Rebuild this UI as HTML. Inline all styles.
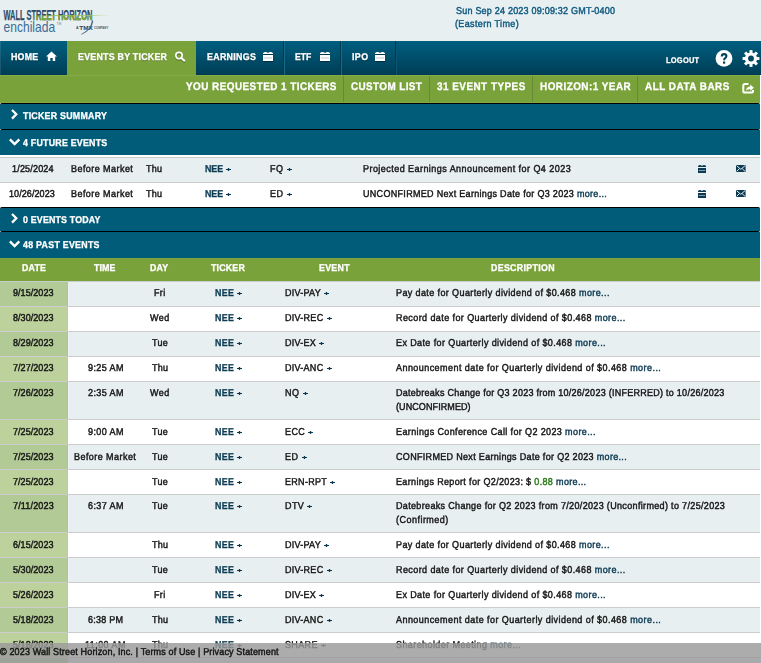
<!DOCTYPE html>
<html><head><meta charset="utf-8"><style>
html,body{margin:0;padding:0;}
body{width:761px;height:663px;overflow:hidden;position:relative;background:#ffffff;font-family:"Liberation Sans", sans-serif;}
</style></head><body>
<div style="position:absolute;left:0px;top:0px;width:761px;height:41px;background:#e8eff1;"></div><svg style="position:absolute;left:0px;top:0px;" width="120" height="40" viewBox="0 0 120 40"><defs><clipPath id="lg"><rect x="33" y="15.6" width="80" height="10"/></clipPath><linearGradient id="sw" x1="0" x2="1"><stop offset="0" stop-color="#7fae3a" stop-opacity="0.2"/><stop offset="0.25" stop-color="#86b43c"/><stop offset="0.75" stop-color="#a6c86a"/><stop offset="1" stop-color="#c9dcae" stop-opacity="0.3"/></linearGradient></defs><text x="3.5" y="19.6" font-family="Liberation Sans" font-weight="bold" font-size="14" textLength="88.8" lengthAdjust="spacingAndGlyphs" fill="#2f4c69" stroke="#2f4c69" stroke-width="0.25">WALL STREET HORIZON</text><text x="3.5" y="19.6" font-family="Liberation Sans" font-weight="bold" font-size="14" textLength="88.8" lengthAdjust="spacingAndGlyphs" fill="#7faa3a" stroke="#7faa3a" stroke-width="0.25" clip-path="url(#lg)">WALL STREET HORIZON</text><path d="M30 16.3 C 50 15.2, 80 14.6, 109 15.3 L 109 15.8 C 80 15.4, 50 15.8, 30 16.6 Z" fill="url(#sw)"/><text x="3.6" y="31.5" font-family="Liberation Sans" font-size="14.6" textLength="51.5" lengthAdjust="spacingAndGlyphs" fill="#3a6b97">enchilada</text><text x="56.5" y="24.5" font-family="Liberation Sans" font-size="3.2" fill="#5a7f9f">TM</text><text x="76" y="29" font-family="Liberation Sans" font-weight="bold" font-size="3.6" fill="#3a4f66">A</text><text x="79.3" y="29.8" font-family="Liberation Sans" font-weight="bold" font-size="5.8" textLength="13.5" lengthAdjust="spacingAndGlyphs" fill="#2b3f63">TMX</text><text x="94" y="28.8" font-family="Liberation Sans" font-weight="bold" font-size="3.1" textLength="14.3" lengthAdjust="spacingAndGlyphs" fill="#4a5b70">COMPANY</text><path d="M92.9 20.6 C 92.6 25.8, 89.5 31.2, 81.3 34.3 C 88.6 30.6, 91.4 26.2, 92.0 20.8 Z" fill="#3a5273" stroke="#3a5273" stroke-width="0.35"/></svg><div style="position:absolute;left:455.50px;top:7px;color:#0f5a80;font-size:10px;line-height:10px;font-weight:normal;letter-spacing:0.240px;white-space:nowrap;text-rendering:geometricPrecision;-webkit-text-stroke:0.45px;transform:scaleX(0.9000);transform-origin:0 0;">Sun Sep 24 2023 09:09:32 GMT-0400</div><div style="position:absolute;left:454.70px;top:20px;color:#0f5a80;font-size:10px;line-height:10px;font-weight:normal;letter-spacing:0.397px;white-space:nowrap;text-rendering:geometricPrecision;-webkit-text-stroke:0.45px;transform:scaleX(0.9000);transform-origin:0 0;">(Eastern Time)</div><div style="position:absolute;left:0px;top:41px;width:761px;height:34px;background:linear-gradient(#005f80, #003d55);"></div><div style="position:absolute;left:0px;top:41px;width:1px;height:34px;background:rgba(255,255,255,0.10);"></div><div style="position:absolute;left:67px;top:41px;width:129px;height:34px;background:#7aa23a;"></div><div style="position:absolute;left:283px;top:41px;width:1px;height:34px;background:#00384f;"></div><div style="position:absolute;left:284px;top:41px;width:1px;height:34px;background:#1b6a88;"></div><div style="position:absolute;left:340px;top:41px;width:1px;height:34px;background:#00384f;"></div><div style="position:absolute;left:341px;top:41px;width:1px;height:34px;background:#1b6a88;"></div><div style="position:absolute;left:395px;top:41px;width:1px;height:34px;background:#00384f;"></div><div style="position:absolute;left:396px;top:41px;width:1px;height:34px;background:#0a5674;"></div><div style="position:absolute;left:10.70px;top:53px;color:white;font-size:9.8px;line-height:9.8px;font-weight:bold;letter-spacing:0.222px;white-space:nowrap;text-rendering:geometricPrecision;-webkit-text-stroke:0.3px;transform:scaleX(0.9000);transform-origin:0 0;text-shadow:0 1px 1px rgba(0,0,0,0.3);">HOME</div><div style="position:absolute;left:77.80px;top:53px;color:white;font-size:9.8px;line-height:9.8px;font-weight:bold;letter-spacing:0.289px;white-space:nowrap;text-rendering:geometricPrecision;-webkit-text-stroke:0.3px;transform:scaleX(0.9000);transform-origin:0 0;text-shadow:0 1px 1px rgba(0,0,0,0.3);">EVENTS BY TICKER</div><div style="position:absolute;left:206.80px;top:53px;color:white;font-size:9.8px;line-height:9.8px;font-weight:bold;letter-spacing:0.365px;white-space:nowrap;text-rendering:geometricPrecision;-webkit-text-stroke:0.3px;transform:scaleX(0.9000);transform-origin:0 0;text-shadow:0 1px 1px rgba(0,0,0,0.3);">EARNINGS</div><div style="position:absolute;left:295.30px;top:53px;color:white;font-size:9.8px;line-height:9.8px;font-weight:bold;letter-spacing:0.000px;white-space:nowrap;text-rendering:geometricPrecision;-webkit-text-stroke:0.3px;transform:scaleX(0.8789);transform-origin:0 0;text-shadow:0 1px 1px rgba(0,0,0,0.3);">ETF</div><div style="position:absolute;left:351.90px;top:53px;color:white;font-size:9.8px;line-height:9.8px;font-weight:bold;letter-spacing:0.444px;white-space:nowrap;text-rendering:geometricPrecision;-webkit-text-stroke:0.3px;transform:scaleX(0.9000);transform-origin:0 0;text-shadow:0 1px 1px rgba(0,0,0,0.3);">IPO</div><div style="position:absolute;left:665.70px;top:56px;color:white;font-size:8.3px;line-height:8.3px;font-weight:bold;letter-spacing:0.267px;white-space:nowrap;text-rendering:geometricPrecision;-webkit-text-stroke:0.3px;transform:scaleX(0.9000);transform-origin:0 0;text-shadow:0 1px 1px rgba(0,0,0,0.3);">LOGOUT</div><svg style="position:absolute;left:46px;top:51px;" width="11" height="10" viewBox="0 0 11 10"><path d="M5.5 0.5 L0 5.5 L1.8 5.5 L1.8 10 L4.3 10 L4.3 7 L6.7 7 L6.7 10 L9.2 10 L9.2 5.5 L11 5.5 Z" fill="white"/></svg><svg style="position:absolute;left:174px;top:51px;filter:drop-shadow(0 1px 0 rgba(0,0,0,0.35));" width="12" height="11" viewBox="0 0 12 11"><circle cx="5" cy="4.6" r="3.2" stroke="white" stroke-width="1.6" fill="none"/><path d="M7.2 7 L10.3 9.6" stroke="white" stroke-width="2.1" stroke-linecap="round"/></svg><svg style="position:absolute;left:263px;top:52px;filter:drop-shadow(0 1px 0 rgba(0,0,0,0.35));" width="10" height="9" viewBox="0 0 10 9"><rect x="0" y="0.8" width="10" height="1.2" fill="white"/><ellipse cx="2.50" cy="1" rx="1.80" ry="1" fill="white"/><ellipse cx="7.50" cy="1" rx="1.80" ry="1" fill="white"/><rect x="0" y="3" width="10" height="6" fill="white"/><rect x="0.8" y="5.70" width="8.4" height="0.6" fill="rgba(0,60,85,0.45)"/></svg><svg style="position:absolute;left:320px;top:52px;filter:drop-shadow(0 1px 0 rgba(0,0,0,0.35));" width="10" height="9" viewBox="0 0 10 9"><rect x="0" y="0.8" width="10" height="1.2" fill="white"/><ellipse cx="2.50" cy="1" rx="1.80" ry="1" fill="white"/><ellipse cx="7.50" cy="1" rx="1.80" ry="1" fill="white"/><rect x="0" y="3" width="10" height="6" fill="white"/><rect x="0.8" y="5.70" width="8.4" height="0.6" fill="rgba(0,60,85,0.45)"/></svg><svg style="position:absolute;left:375px;top:52px;filter:drop-shadow(0 1px 0 rgba(0,0,0,0.35));" width="10" height="9" viewBox="0 0 10 9"><rect x="0" y="0.8" width="10" height="1.2" fill="white"/><ellipse cx="2.50" cy="1" rx="1.80" ry="1" fill="white"/><ellipse cx="7.50" cy="1" rx="1.80" ry="1" fill="white"/><rect x="0" y="3" width="10" height="6" fill="white"/><rect x="0.8" y="5.70" width="8.4" height="0.6" fill="rgba(0,60,85,0.45)"/></svg><svg style="position:absolute;left:715px;top:49px;" width="18" height="18" viewBox="0 0 18 18"><circle cx="9" cy="9.4" r="8.4" fill="white"/><path d="M6.8 7.4 Q6.8 5.1 9.1 5.1 Q11.4 5.1 11.4 7.1 Q11.4 8.5 10.1 9.2 Q9.1 9.8 9.1 11.3" stroke="#02415a" stroke-width="2.1" fill="none"/><rect x="8" y="12.5" width="2.2" height="2.2" fill="#02415a"/></svg><svg style="position:absolute;left:742px;top:50px;" width="18" height="18" viewBox="0 0 18 18"><g transform="translate(9 8.5)"><rect x="-1.5" y="-8.4" width="3.0" height="4" fill="white" transform="rotate(0)"/><rect x="-1.5" y="-8.4" width="3.0" height="4" fill="white" transform="rotate(45)"/><rect x="-1.5" y="-8.4" width="3.0" height="4" fill="white" transform="rotate(90)"/><rect x="-1.5" y="-8.4" width="3.0" height="4" fill="white" transform="rotate(135)"/><rect x="-1.5" y="-8.4" width="3.0" height="4" fill="white" transform="rotate(180)"/><rect x="-1.5" y="-8.4" width="3.0" height="4" fill="white" transform="rotate(225)"/><rect x="-1.5" y="-8.4" width="3.0" height="4" fill="white" transform="rotate(270)"/><rect x="-1.5" y="-8.4" width="3.0" height="4" fill="white" transform="rotate(315)"/><circle r="6.1" fill="white"/><circle r="2.9" fill="#014560"/></g></svg><div style="position:absolute;left:0px;top:75px;width:760px;height:28px;background:#7aa23a;"></div><div style="position:absolute;left:0px;top:75px;width:760px;height:1px;background:#84ab45;"></div><div style="position:absolute;left:0px;top:102px;width:760px;height:1px;background:#82a946;"></div><div style="position:absolute;left:343px;top:76px;width:1px;height:26px;background:#668838;"></div><div style="position:absolute;left:429px;top:76px;width:1px;height:26px;background:#668838;"></div><div style="position:absolute;left:532px;top:76px;width:1px;height:26px;background:#668838;"></div><div style="position:absolute;left:637px;top:76px;width:1px;height:26px;background:#668838;"></div><div style="position:absolute;left:186.00px;top:82px;color:white;font-size:11px;line-height:11px;font-weight:bold;letter-spacing:0.515px;white-space:nowrap;text-rendering:geometricPrecision;-webkit-text-stroke:0.3px;transform:scaleX(0.9000);transform-origin:0 0;">YOU REQUESTED 1 TICKERS</div><div style="position:absolute;left:351.00px;top:82px;color:white;font-size:11px;line-height:11px;font-weight:bold;letter-spacing:0.444px;white-space:nowrap;text-rendering:geometricPrecision;-webkit-text-stroke:0.3px;transform:scaleX(0.9000);transform-origin:0 0;">CUSTOM LIST</div><div style="position:absolute;left:437.10px;top:82px;color:white;font-size:11px;line-height:11px;font-weight:bold;letter-spacing:0.538px;white-space:nowrap;text-rendering:geometricPrecision;-webkit-text-stroke:0.3px;transform:scaleX(0.9000);transform-origin:0 0;">31 EVENT TYPES</div><div style="position:absolute;left:540.00px;top:82px;color:white;font-size:11px;line-height:11px;font-weight:bold;letter-spacing:0.530px;white-space:nowrap;text-rendering:geometricPrecision;-webkit-text-stroke:0.3px;transform:scaleX(0.9000);transform-origin:0 0;">HORIZON:1 YEAR</div><div style="position:absolute;left:645.10px;top:82px;color:white;font-size:11px;line-height:11px;font-weight:bold;letter-spacing:0.565px;white-space:nowrap;text-rendering:geometricPrecision;-webkit-text-stroke:0.3px;transform:scaleX(0.9000);transform-origin:0 0;">ALL DATA BARS</div><svg style="position:absolute;left:741px;top:81px;" width="15" height="14" viewBox="0 0 15 14"><path d="M7.5 3 H4 Q2.3 3 2.3 4.7 V9.9 Q2.3 11.6 4 11.6 H10.3 Q12 11.6 12 9.9 V9" stroke="white" stroke-width="2" fill="none"/><path d="M5 9.6 Q5.6 5.8 9.3 5.6 V3.6 L12.9 6.8 L9.3 10 V8 Q6.8 8 5 9.6 Z" fill="white"/></svg><div style="position:absolute;left:0;top:103px;width:760px;height:25px;background:#005c78;border-top:1px solid #000;border-radius:2px 2px 0 0;"></div><div style="position:absolute;left:22.90px;top:112px;color:white;font-size:9.8px;line-height:9.8px;font-weight:bold;letter-spacing:0.291px;white-space:nowrap;text-rendering:geometricPrecision;-webkit-text-stroke:0.3px;transform:scaleX(0.9000);transform-origin:0 0;">TICKER SUMMARY</div><svg style="position:absolute;left:10px;top:109px;" width="9" height="11" viewBox="0 0 9 11"><path d="M2 1.0 L6.3 5.3 L2 9.6" stroke="white" stroke-width="2.3" fill="none"/></svg><div style="position:absolute;left:0;top:129px;width:760px;height:25px;background:#005c78;border-top:1px solid #000;border-radius:2px 2px 0 0;"></div><div style="position:absolute;left:22.90px;top:139px;color:white;font-size:9.8px;line-height:9.8px;font-weight:bold;letter-spacing:0.270px;white-space:nowrap;text-rendering:geometricPrecision;-webkit-text-stroke:0.3px;transform:scaleX(0.9000);transform-origin:0 0;">4 FUTURE EVENTS</div><svg style="position:absolute;left:8px;top:138px;" width="13" height="9" viewBox="0 0 13 9"><path d="M1.9 1.4 L6.6 6.1 L11.3 1.4" stroke="white" stroke-width="2.4" fill="none"/></svg><div style="position:absolute;left:0px;top:155px;width:760px;height:2px;background:#ffffff;"></div><div style="position:absolute;left:0px;top:157px;width:760px;height:1px;background:#cccccc;"></div><div style="position:absolute;left:0px;top:158px;width:760px;height:24px;background:#e8eff1;"></div><div style="position:absolute;left:12.30px;top:165px;color:#161616;font-size:10px;line-height:10px;font-weight:normal;letter-spacing:0.208px;white-space:nowrap;text-rendering:geometricPrecision;-webkit-text-stroke:0.45px;transform:scaleX(0.9000);transform-origin:0 0;">1/25/2024</div><div style="position:absolute;left:71.00px;top:165px;color:#161616;font-size:10px;line-height:10px;font-weight:normal;letter-spacing:0.491px;white-space:nowrap;text-rendering:geometricPrecision;-webkit-text-stroke:0.45px;transform:scaleX(0.9000);transform-origin:0 0;">Before Market</div><div style="position:absolute;left:146.00px;top:165px;color:#161616;font-size:10px;line-height:10px;font-weight:normal;letter-spacing:0.278px;white-space:nowrap;text-rendering:geometricPrecision;-webkit-text-stroke:0.45px;transform:scaleX(0.9000);transform-origin:0 0;">Thu</div><div style="position:absolute;left:205.00px;top:165px;color:#0b3a52;font-size:9.8px;line-height:9.8px;font-weight:bold;letter-spacing:0.000px;white-space:nowrap;text-rendering:geometricPrecision;-webkit-text-stroke:0.3px;transform:scaleX(0.9000);transform-origin:0 0;">NEE</div><svg style="position:absolute;left:226px;top:168px;" width="5" height="3" viewBox="0 0 5 3"><rect x="0" y="1" width="5" height="1" fill="#0b3a52"/><rect x="2" y="0" width="1" height="3" fill="#0b3a52"/><rect x="1" y="0.5" width="3" height="2" fill="#0b3a52" opacity="0.35"/></svg><div style="position:absolute;left:270.00px;top:165px;color:#161616;font-size:10px;line-height:10px;font-weight:normal;letter-spacing:0.622px;white-space:nowrap;text-rendering:geometricPrecision;-webkit-text-stroke:0.45px;transform:scaleX(0.9000);transform-origin:0 0;">FQ</div><svg style="position:absolute;left:287px;top:168px" width="5" height="3" viewBox="0 0 5 3"><rect x="0" y="1" width="5" height="1" fill="#0b3a52"/><rect x="2" y="0" width="1" height="3" fill="#0b3a52"/><rect x="1" y="0.5" width="3" height="2" fill="#0b3a52" opacity="0.35"/></svg><div style="position:absolute;left:363.00px;top:165px;color:#161616;font-size:10px;line-height:10px;font-weight:normal;letter-spacing:0.503px;white-space:nowrap;text-rendering:geometricPrecision;-webkit-text-stroke:0.45px;transform:scaleX(0.9000);transform-origin:0 0;">Projected Earnings Announcement for Q4 2023</div><svg style="position:absolute;left:698px;top:165px;" width="8" height="8" viewBox="0 0 8 8"><rect x="0" y="0.8" width="8" height="1.2" fill="#0b3a52"/><ellipse cx="2.00" cy="1" rx="1.44" ry="1" fill="#0b3a52"/><ellipse cx="6.00" cy="1" rx="1.44" ry="1" fill="#0b3a52"/><rect x="0" y="3" width="8" height="5" fill="#0b3a52"/><rect x="0.8" y="5.20" width="6.4" height="0.6" fill="rgba(255,255,255,0.85)"/></svg><svg style="position:absolute;left:736px;top:165px;" width="10" height="7" viewBox="0 0 10 7"><rect x="0" y="0" width="9.6" height="7" rx="0.6" fill="#0b3a52"/><path d="M0.6 0.7 L4.8 4.3 L9 0.7 M0.6 6.4 L3.4 3.6 M9 6.4 L6.2 3.6" stroke="white" stroke-width="0.9" fill="none"/></svg><div style="position:absolute;left:0px;top:182px;width:760px;height:1px;background:#cccccc;"></div><div style="position:absolute;left:0px;top:183px;width:760px;height:24px;background:#ffffff;"></div><div style="position:absolute;left:9.45px;top:190px;color:#161616;font-size:10px;line-height:10px;font-weight:normal;letter-spacing:0.086px;white-space:nowrap;text-rendering:geometricPrecision;-webkit-text-stroke:0.45px;transform:scaleX(0.9000);transform-origin:0 0;">10/26/2023</div><div style="position:absolute;left:71.00px;top:190px;color:#161616;font-size:10px;line-height:10px;font-weight:normal;letter-spacing:0.491px;white-space:nowrap;text-rendering:geometricPrecision;-webkit-text-stroke:0.45px;transform:scaleX(0.9000);transform-origin:0 0;">Before Market</div><div style="position:absolute;left:146.00px;top:190px;color:#161616;font-size:10px;line-height:10px;font-weight:normal;letter-spacing:0.278px;white-space:nowrap;text-rendering:geometricPrecision;-webkit-text-stroke:0.45px;transform:scaleX(0.9000);transform-origin:0 0;">Thu</div><div style="position:absolute;left:205.00px;top:190px;color:#0b3a52;font-size:9.8px;line-height:9.8px;font-weight:bold;letter-spacing:0.000px;white-space:nowrap;text-rendering:geometricPrecision;-webkit-text-stroke:0.3px;transform:scaleX(0.9000);transform-origin:0 0;">NEE</div><svg style="position:absolute;left:226px;top:193px;" width="5" height="3" viewBox="0 0 5 3"><rect x="0" y="1" width="5" height="1" fill="#0b3a52"/><rect x="2" y="0" width="1" height="3" fill="#0b3a52"/><rect x="1" y="0.5" width="3" height="2" fill="#0b3a52" opacity="0.35"/></svg><div style="position:absolute;left:270.00px;top:190px;color:#161616;font-size:10px;line-height:10px;font-weight:normal;letter-spacing:0.622px;white-space:nowrap;text-rendering:geometricPrecision;-webkit-text-stroke:0.45px;transform:scaleX(0.9000);transform-origin:0 0;">ED</div><svg style="position:absolute;left:287px;top:193px" width="5" height="3" viewBox="0 0 5 3"><rect x="0" y="1" width="5" height="1" fill="#0b3a52"/><rect x="2" y="0" width="1" height="3" fill="#0b3a52"/><rect x="1" y="0.5" width="3" height="2" fill="#0b3a52" opacity="0.35"/></svg><div style="position:absolute;left:363.00px;top:190px;color:#161616;font-size:10px;line-height:10px;font-weight:normal;letter-spacing:0.345px;white-space:nowrap;text-rendering:geometricPrecision;-webkit-text-stroke:0.45px;transform:scaleX(0.9000);transform-origin:0 0;">UNCONFIRMED Next Earnings Date for Q3 2023 <span style="color:#0b3a52">more...</span></div><svg style="position:absolute;left:698px;top:190px;" width="8" height="8" viewBox="0 0 8 8"><rect x="0" y="0.8" width="8" height="1.2" fill="#0b3a52"/><ellipse cx="2.00" cy="1" rx="1.44" ry="1" fill="#0b3a52"/><ellipse cx="6.00" cy="1" rx="1.44" ry="1" fill="#0b3a52"/><rect x="0" y="3" width="8" height="5" fill="#0b3a52"/><rect x="0.8" y="5.20" width="6.4" height="0.6" fill="rgba(255,255,255,0.85)"/></svg><svg style="position:absolute;left:736px;top:190px;" width="10" height="7" viewBox="0 0 10 7"><rect x="0" y="0" width="9.6" height="7" rx="0.6" fill="#0b3a52"/><path d="M0.6 0.7 L4.8 4.3 L9 0.7 M0.6 6.4 L3.4 3.6 M9 6.4 L6.2 3.6" stroke="white" stroke-width="0.9" fill="none"/></svg><div style="position:absolute;left:0;top:207px;width:760px;height:23px;background:#005c78;border-top:1px solid #000;border-radius:2px 2px 0 0;"></div><div style="position:absolute;left:22.90px;top:216px;color:white;font-size:9.8px;line-height:9.8px;font-weight:bold;letter-spacing:0.214px;white-space:nowrap;text-rendering:geometricPrecision;-webkit-text-stroke:0.3px;transform:scaleX(0.9000);transform-origin:0 0;">0 EVENTS TODAY</div><svg style="position:absolute;left:10px;top:213px;" width="9" height="11" viewBox="0 0 9 11"><path d="M2 1.0 L6.3 5.3 L2 9.6" stroke="white" stroke-width="2.3" fill="none"/></svg><div style="position:absolute;left:0;top:231px;width:760px;height:26px;background:#005c78;border-top:1px solid #000;border-radius:2px 2px 0 0;"></div><div style="position:absolute;left:22.90px;top:241px;color:white;font-size:9.8px;line-height:9.8px;font-weight:bold;letter-spacing:0.308px;white-space:nowrap;text-rendering:geometricPrecision;-webkit-text-stroke:0.3px;transform:scaleX(0.9000);transform-origin:0 0;">48 PAST EVENTS</div><svg style="position:absolute;left:8px;top:240px;" width="13" height="9" viewBox="0 0 13 9"><path d="M1.9 1.4 L6.6 6.1 L11.3 1.4" stroke="white" stroke-width="2.4" fill="none"/></svg><div style="position:absolute;left:0px;top:258px;width:760px;height:23px;background:#7aa23a;"></div><div style="position:absolute;left:21.70px;top:264px;color:white;font-size:9.8px;line-height:9.8px;font-weight:bold;letter-spacing:0.185px;white-space:nowrap;text-rendering:geometricPrecision;-webkit-text-stroke:0.3px;transform:scaleX(0.9000);transform-origin:0 0;">DATE</div><div style="position:absolute;left:94.00px;top:264px;color:white;font-size:9.8px;line-height:9.8px;font-weight:bold;letter-spacing:0.074px;white-space:nowrap;text-rendering:geometricPrecision;-webkit-text-stroke:0.3px;transform:scaleX(0.9000);transform-origin:0 0;">TIME</div><div style="position:absolute;left:150.40px;top:264px;color:white;font-size:9.8px;line-height:9.8px;font-weight:bold;letter-spacing:0.111px;white-space:nowrap;text-rendering:geometricPrecision;-webkit-text-stroke:0.3px;transform:scaleX(0.9000);transform-origin:0 0;">DAY</div><div style="position:absolute;left:211.00px;top:264px;color:white;font-size:9.8px;line-height:9.8px;font-weight:bold;letter-spacing:0.222px;white-space:nowrap;text-rendering:geometricPrecision;-webkit-text-stroke:0.3px;transform:scaleX(0.9000);transform-origin:0 0;">TICKER</div><div style="position:absolute;left:319.40px;top:264px;color:white;font-size:9.8px;line-height:9.8px;font-weight:bold;letter-spacing:0.333px;white-space:nowrap;text-rendering:geometricPrecision;-webkit-text-stroke:0.3px;transform:scaleX(0.9000);transform-origin:0 0;">EVENT</div><div style="position:absolute;left:491.40px;top:264px;color:white;font-size:9.8px;line-height:9.8px;font-weight:bold;letter-spacing:0.367px;white-space:nowrap;text-rendering:geometricPrecision;-webkit-text-stroke:0.3px;transform:scaleX(0.9000);transform-origin:0 0;">DESCRIPTION</div><div style="position:absolute;left:0px;top:281px;width:760px;height:1px;background:#cccccc;"></div><div style="position:absolute;left:0px;top:282px;width:760px;height:24px;background:#e8eff1;"></div><div style="position:absolute;left:0px;top:282px;width:68px;height:24px;background:#b2ca96;"></div><div style="position:absolute;left:68px;top:282px;width:1px;height:24px;background:#eef2f8;"></div><div style="position:absolute;left:67px;top:282px;width:1px;height:24px;background:#adc791;"></div><div style="position:absolute;left:13.25px;top:289px;color:#161616;font-size:10px;line-height:10px;font-weight:normal;letter-spacing:0.056px;white-space:nowrap;text-rendering:geometricPrecision;-webkit-text-stroke:0.45px;transform:scaleX(0.9000);transform-origin:0 0;">9/15/2023</div><div style="position:absolute;left:153.95px;top:289px;color:#161616;font-size:10px;line-height:10px;font-weight:normal;letter-spacing:0.389px;white-space:nowrap;text-rendering:geometricPrecision;-webkit-text-stroke:0.45px;transform:scaleX(0.9000);transform-origin:0 0;">Fri</div><div style="position:absolute;left:215.30px;top:289px;color:#0b3a52;font-size:9.8px;line-height:9.8px;font-weight:bold;letter-spacing:0.389px;white-space:nowrap;text-rendering:geometricPrecision;-webkit-text-stroke:0.3px;transform:scaleX(0.9000);transform-origin:0 0;">NEE</div><svg style="position:absolute;left:237px;top:292px;" width="5" height="3" viewBox="0 0 5 3"><rect x="0" y="1" width="5" height="1" fill="#0b3a52"/><rect x="2" y="0" width="1" height="3" fill="#0b3a52"/><rect x="1" y="0.5" width="3" height="2" fill="#0b3a52" opacity="0.35"/></svg><div style="position:absolute;left:285.00px;top:289px;color:#161616;font-size:10px;line-height:10px;font-weight:normal;letter-spacing:0.281px;white-space:nowrap;text-rendering:geometricPrecision;-webkit-text-stroke:0.45px;transform:scaleX(0.9000);transform-origin:0 0;">DIV-PAY</div><svg style="position:absolute;left:324px;top:292px" width="5" height="3" viewBox="0 0 5 3"><rect x="0" y="1" width="5" height="1" fill="#0b3a52"/><rect x="2" y="0" width="1" height="3" fill="#0b3a52"/><rect x="1" y="0.5" width="3" height="2" fill="#0b3a52" opacity="0.35"/></svg><div style="position:absolute;left:396.00px;top:289px;color:#161616;font-size:10px;line-height:10px;font-weight:normal;letter-spacing:0.435px;white-space:nowrap;text-rendering:geometricPrecision;-webkit-text-stroke:0.45px;transform:scaleX(0.9000);transform-origin:0 0;">Pay date for Quarterly dividend of $0.468 <span style="color:#0b3a52">more...</span></div><div style="position:absolute;left:0px;top:306px;width:760px;height:1px;background:#cccccc;"></div><div style="position:absolute;left:0px;top:307px;width:760px;height:24px;background:#ffffff;"></div><div style="position:absolute;left:0px;top:307px;width:68px;height:24px;background:#bdd19c;"></div><div style="position:absolute;left:67px;top:307px;width:1px;height:24px;background:#b8cf98;"></div><div style="position:absolute;left:13.25px;top:314px;color:#161616;font-size:10px;line-height:10px;font-weight:normal;letter-spacing:0.056px;white-space:nowrap;text-rendering:geometricPrecision;-webkit-text-stroke:0.45px;transform:scaleX(0.9000);transform-origin:0 0;">8/30/2023</div><div style="position:absolute;left:150.35px;top:314px;color:#161616;font-size:10px;line-height:10px;font-weight:normal;letter-spacing:0.500px;white-space:nowrap;text-rendering:geometricPrecision;-webkit-text-stroke:0.45px;transform:scaleX(0.9000);transform-origin:0 0;">Wed</div><div style="position:absolute;left:215.30px;top:314px;color:#0b3a52;font-size:9.8px;line-height:9.8px;font-weight:bold;letter-spacing:0.389px;white-space:nowrap;text-rendering:geometricPrecision;-webkit-text-stroke:0.3px;transform:scaleX(0.9000);transform-origin:0 0;">NEE</div><svg style="position:absolute;left:237px;top:317px;" width="5" height="3" viewBox="0 0 5 3"><rect x="0" y="1" width="5" height="1" fill="#0b3a52"/><rect x="2" y="0" width="1" height="3" fill="#0b3a52"/><rect x="1" y="0.5" width="3" height="2" fill="#0b3a52" opacity="0.35"/></svg><div style="position:absolute;left:285.00px;top:314px;color:#161616;font-size:10px;line-height:10px;font-weight:normal;letter-spacing:0.304px;white-space:nowrap;text-rendering:geometricPrecision;-webkit-text-stroke:0.45px;transform:scaleX(0.9000);transform-origin:0 0;">DIV-REC</div><svg style="position:absolute;left:327px;top:317px" width="5" height="3" viewBox="0 0 5 3"><rect x="0" y="1" width="5" height="1" fill="#0b3a52"/><rect x="2" y="0" width="1" height="3" fill="#0b3a52"/><rect x="1" y="0.5" width="3" height="2" fill="#0b3a52" opacity="0.35"/></svg><div style="position:absolute;left:396.00px;top:314px;color:#161616;font-size:10px;line-height:10px;font-weight:normal;letter-spacing:0.460px;white-space:nowrap;text-rendering:geometricPrecision;-webkit-text-stroke:0.45px;transform:scaleX(0.9000);transform-origin:0 0;">Record date for Quarterly dividend of $0.468 <span style="color:#0b3a52">more...</span></div><div style="position:absolute;left:0px;top:331px;width:760px;height:1px;background:#cccccc;"></div><div style="position:absolute;left:0px;top:332px;width:760px;height:24px;background:#e8eff1;"></div><div style="position:absolute;left:0px;top:332px;width:68px;height:24px;background:#b2ca96;"></div><div style="position:absolute;left:68px;top:332px;width:1px;height:24px;background:#eef2f8;"></div><div style="position:absolute;left:67px;top:332px;width:1px;height:24px;background:#adc791;"></div><div style="position:absolute;left:13.25px;top:339px;color:#161616;font-size:10px;line-height:10px;font-weight:normal;letter-spacing:0.056px;white-space:nowrap;text-rendering:geometricPrecision;-webkit-text-stroke:0.45px;transform:scaleX(0.9000);transform-origin:0 0;">8/29/2023</div><div style="position:absolute;left:152.15px;top:339px;color:#161616;font-size:10px;line-height:10px;font-weight:normal;letter-spacing:0.278px;white-space:nowrap;text-rendering:geometricPrecision;-webkit-text-stroke:0.45px;transform:scaleX(0.9000);transform-origin:0 0;">Tue</div><div style="position:absolute;left:215.30px;top:339px;color:#0b3a52;font-size:9.8px;line-height:9.8px;font-weight:bold;letter-spacing:0.389px;white-space:nowrap;text-rendering:geometricPrecision;-webkit-text-stroke:0.3px;transform:scaleX(0.9000);transform-origin:0 0;">NEE</div><svg style="position:absolute;left:237px;top:342px;" width="5" height="3" viewBox="0 0 5 3"><rect x="0" y="1" width="5" height="1" fill="#0b3a52"/><rect x="2" y="0" width="1" height="3" fill="#0b3a52"/><rect x="1" y="0.5" width="3" height="2" fill="#0b3a52" opacity="0.35"/></svg><div style="position:absolute;left:285.00px;top:339px;color:#161616;font-size:10px;line-height:10px;font-weight:normal;letter-spacing:0.293px;white-space:nowrap;text-rendering:geometricPrecision;-webkit-text-stroke:0.45px;transform:scaleX(0.9000);transform-origin:0 0;">DIV-EX</div><svg style="position:absolute;left:319px;top:342px" width="5" height="3" viewBox="0 0 5 3"><rect x="0" y="1" width="5" height="1" fill="#0b3a52"/><rect x="2" y="0" width="1" height="3" fill="#0b3a52"/><rect x="1" y="0.5" width="3" height="2" fill="#0b3a52" opacity="0.35"/></svg><div style="position:absolute;left:396.00px;top:339px;color:#161616;font-size:10px;line-height:10px;font-weight:normal;letter-spacing:0.437px;white-space:nowrap;text-rendering:geometricPrecision;-webkit-text-stroke:0.45px;transform:scaleX(0.9000);transform-origin:0 0;">Ex Date for Quarterly dividend of $0.468 <span style="color:#0b3a52">more...</span></div><div style="position:absolute;left:0px;top:356px;width:760px;height:1px;background:#cccccc;"></div><div style="position:absolute;left:0px;top:357px;width:760px;height:24px;background:#ffffff;"></div><div style="position:absolute;left:0px;top:357px;width:68px;height:24px;background:#bdd19c;"></div><div style="position:absolute;left:67px;top:357px;width:1px;height:24px;background:#b8cf98;"></div><div style="position:absolute;left:13.25px;top:364px;color:#161616;font-size:10px;line-height:10px;font-weight:normal;letter-spacing:0.056px;white-space:nowrap;text-rendering:geometricPrecision;-webkit-text-stroke:0.45px;transform:scaleX(0.9000);transform-origin:0 0;">7/27/2023</div><div style="position:absolute;left:87.85px;top:364px;color:#161616;font-size:10px;line-height:10px;font-weight:normal;letter-spacing:0.463px;white-space:nowrap;text-rendering:geometricPrecision;-webkit-text-stroke:0.45px;transform:scaleX(0.9000);transform-origin:0 0;">9:25 AM</div><div style="position:absolute;left:151.70px;top:364px;color:#161616;font-size:10px;line-height:10px;font-weight:normal;letter-spacing:0.278px;white-space:nowrap;text-rendering:geometricPrecision;-webkit-text-stroke:0.45px;transform:scaleX(0.9000);transform-origin:0 0;">Thu</div><div style="position:absolute;left:215.30px;top:364px;color:#0b3a52;font-size:9.8px;line-height:9.8px;font-weight:bold;letter-spacing:0.389px;white-space:nowrap;text-rendering:geometricPrecision;-webkit-text-stroke:0.3px;transform:scaleX(0.9000);transform-origin:0 0;">NEE</div><svg style="position:absolute;left:237px;top:367px;" width="5" height="3" viewBox="0 0 5 3"><rect x="0" y="1" width="5" height="1" fill="#0b3a52"/><rect x="2" y="0" width="1" height="3" fill="#0b3a52"/><rect x="1" y="0.5" width="3" height="2" fill="#0b3a52" opacity="0.35"/></svg><div style="position:absolute;left:285.00px;top:364px;color:#161616;font-size:10px;line-height:10px;font-weight:normal;letter-spacing:0.304px;white-space:nowrap;text-rendering:geometricPrecision;-webkit-text-stroke:0.45px;transform:scaleX(0.9000);transform-origin:0 0;">DIV-ANC</div><svg style="position:absolute;left:327px;top:367px" width="5" height="3" viewBox="0 0 5 3"><rect x="0" y="1" width="5" height="1" fill="#0b3a52"/><rect x="2" y="0" width="1" height="3" fill="#0b3a52"/><rect x="1" y="0.5" width="3" height="2" fill="#0b3a52" opacity="0.35"/></svg><div style="position:absolute;left:396.00px;top:364px;color:#161616;font-size:10px;line-height:10px;font-weight:normal;letter-spacing:0.491px;white-space:nowrap;text-rendering:geometricPrecision;-webkit-text-stroke:0.45px;transform:scaleX(0.9000);transform-origin:0 0;">Announcement date for Quarterly dividend of $0.468 <span style="color:#0b3a52">more...</span></div><div style="position:absolute;left:0px;top:381px;width:760px;height:1px;background:#cccccc;"></div><div style="position:absolute;left:0px;top:382px;width:760px;height:37px;background:#e8eff1;"></div><div style="position:absolute;left:0px;top:382px;width:68px;height:37px;background:#b2ca96;"></div><div style="position:absolute;left:68px;top:382px;width:1px;height:37px;background:#eef2f8;"></div><div style="position:absolute;left:67px;top:382px;width:1px;height:37px;background:#adc791;"></div><div style="position:absolute;left:13.25px;top:389px;color:#161616;font-size:10px;line-height:10px;font-weight:normal;letter-spacing:0.056px;white-space:nowrap;text-rendering:geometricPrecision;-webkit-text-stroke:0.45px;transform:scaleX(0.9000);transform-origin:0 0;">7/26/2023</div><div style="position:absolute;left:87.85px;top:389px;color:#161616;font-size:10px;line-height:10px;font-weight:normal;letter-spacing:0.463px;white-space:nowrap;text-rendering:geometricPrecision;-webkit-text-stroke:0.45px;transform:scaleX(0.9000);transform-origin:0 0;">2:35 AM</div><div style="position:absolute;left:150.35px;top:389px;color:#161616;font-size:10px;line-height:10px;font-weight:normal;letter-spacing:0.500px;white-space:nowrap;text-rendering:geometricPrecision;-webkit-text-stroke:0.45px;transform:scaleX(0.9000);transform-origin:0 0;">Wed</div><div style="position:absolute;left:215.30px;top:389px;color:#0b3a52;font-size:9.8px;line-height:9.8px;font-weight:bold;letter-spacing:0.389px;white-space:nowrap;text-rendering:geometricPrecision;-webkit-text-stroke:0.3px;transform:scaleX(0.9000);transform-origin:0 0;">NEE</div><svg style="position:absolute;left:237px;top:392px;" width="5" height="3" viewBox="0 0 5 3"><rect x="0" y="1" width="5" height="1" fill="#0b3a52"/><rect x="2" y="0" width="1" height="3" fill="#0b3a52"/><rect x="1" y="0.5" width="3" height="2" fill="#0b3a52" opacity="0.35"/></svg><div style="position:absolute;left:285.00px;top:389px;color:#161616;font-size:10px;line-height:10px;font-weight:normal;letter-spacing:0.667px;white-space:nowrap;text-rendering:geometricPrecision;-webkit-text-stroke:0.45px;transform:scaleX(0.9000);transform-origin:0 0;">NQ</div><svg style="position:absolute;left:303px;top:392px" width="5" height="3" viewBox="0 0 5 3"><rect x="0" y="1" width="5" height="1" fill="#0b3a52"/><rect x="2" y="0" width="1" height="3" fill="#0b3a52"/><rect x="1" y="0.5" width="3" height="2" fill="#0b3a52" opacity="0.35"/></svg><div style="position:absolute;left:396.00px;top:389px;color:#161616;font-size:10px;line-height:10px;font-weight:normal;letter-spacing:0.291px;white-space:nowrap;text-rendering:geometricPrecision;-webkit-text-stroke:0.45px;transform:scaleX(0.9000);transform-origin:0 0;">Datebreaks Change for Q3 2023 from 10/26/2023 (INFERRED) to 10/26/2023</div><div style="position:absolute;left:396.00px;top:403px;color:#161616;font-size:10px;line-height:10px;font-weight:normal;letter-spacing:0.102px;white-space:nowrap;text-rendering:geometricPrecision;-webkit-text-stroke:0.45px;transform:scaleX(0.9000);transform-origin:0 0;">(UNCONFIRMED)</div><div style="position:absolute;left:0px;top:419px;width:760px;height:1px;background:#cccccc;"></div><div style="position:absolute;left:0px;top:420px;width:760px;height:24px;background:#ffffff;"></div><div style="position:absolute;left:0px;top:420px;width:68px;height:24px;background:#bdd19c;"></div><div style="position:absolute;left:67px;top:420px;width:1px;height:24px;background:#b8cf98;"></div><div style="position:absolute;left:13.25px;top:428px;color:#161616;font-size:10px;line-height:10px;font-weight:normal;letter-spacing:0.056px;white-space:nowrap;text-rendering:geometricPrecision;-webkit-text-stroke:0.45px;transform:scaleX(0.9000);transform-origin:0 0;">7/25/2023</div><div style="position:absolute;left:87.85px;top:428px;color:#161616;font-size:10px;line-height:10px;font-weight:normal;letter-spacing:0.463px;white-space:nowrap;text-rendering:geometricPrecision;-webkit-text-stroke:0.45px;transform:scaleX(0.9000);transform-origin:0 0;">9:00 AM</div><div style="position:absolute;left:152.15px;top:428px;color:#161616;font-size:10px;line-height:10px;font-weight:normal;letter-spacing:0.278px;white-space:nowrap;text-rendering:geometricPrecision;-webkit-text-stroke:0.45px;transform:scaleX(0.9000);transform-origin:0 0;">Tue</div><div style="position:absolute;left:215.30px;top:428px;color:#0b3a52;font-size:9.8px;line-height:9.8px;font-weight:bold;letter-spacing:0.389px;white-space:nowrap;text-rendering:geometricPrecision;-webkit-text-stroke:0.3px;transform:scaleX(0.9000);transform-origin:0 0;">NEE</div><svg style="position:absolute;left:237px;top:431px;" width="5" height="3" viewBox="0 0 5 3"><rect x="0" y="1" width="5" height="1" fill="#0b3a52"/><rect x="2" y="0" width="1" height="3" fill="#0b3a52"/><rect x="1" y="0.5" width="3" height="2" fill="#0b3a52" opacity="0.35"/></svg><div style="position:absolute;left:285.00px;top:428px;color:#161616;font-size:10px;line-height:10px;font-weight:normal;letter-spacing:0.467px;white-space:nowrap;text-rendering:geometricPrecision;-webkit-text-stroke:0.45px;transform:scaleX(0.9000);transform-origin:0 0;">ECC</div><svg style="position:absolute;left:308px;top:431px" width="5" height="3" viewBox="0 0 5 3"><rect x="0" y="1" width="5" height="1" fill="#0b3a52"/><rect x="2" y="0" width="1" height="3" fill="#0b3a52"/><rect x="1" y="0.5" width="3" height="2" fill="#0b3a52" opacity="0.35"/></svg><div style="position:absolute;left:396.00px;top:428px;color:#161616;font-size:10px;line-height:10px;font-weight:normal;letter-spacing:0.421px;white-space:nowrap;text-rendering:geometricPrecision;-webkit-text-stroke:0.45px;transform:scaleX(0.9000);transform-origin:0 0;">Earnings Conference Call for Q2 2023 <span style="color:#0b3a52">more...</span></div><div style="position:absolute;left:0px;top:444px;width:760px;height:1px;background:#cccccc;"></div><div style="position:absolute;left:0px;top:445px;width:760px;height:24px;background:#e8eff1;"></div><div style="position:absolute;left:0px;top:445px;width:68px;height:24px;background:#b2ca96;"></div><div style="position:absolute;left:68px;top:445px;width:1px;height:24px;background:#eef2f8;"></div><div style="position:absolute;left:67px;top:445px;width:1px;height:24px;background:#adc791;"></div><div style="position:absolute;left:13.25px;top:453px;color:#161616;font-size:10px;line-height:10px;font-weight:normal;letter-spacing:0.056px;white-space:nowrap;text-rendering:geometricPrecision;-webkit-text-stroke:0.45px;transform:scaleX(0.9000);transform-origin:0 0;">7/25/2023</div><div style="position:absolute;left:74.35px;top:453px;color:#161616;font-size:10px;line-height:10px;font-weight:normal;letter-spacing:0.491px;white-space:nowrap;text-rendering:geometricPrecision;-webkit-text-stroke:0.45px;transform:scaleX(0.9000);transform-origin:0 0;">Before Market</div><div style="position:absolute;left:152.15px;top:453px;color:#161616;font-size:10px;line-height:10px;font-weight:normal;letter-spacing:0.278px;white-space:nowrap;text-rendering:geometricPrecision;-webkit-text-stroke:0.45px;transform:scaleX(0.9000);transform-origin:0 0;">Tue</div><div style="position:absolute;left:215.30px;top:453px;color:#0b3a52;font-size:9.8px;line-height:9.8px;font-weight:bold;letter-spacing:0.389px;white-space:nowrap;text-rendering:geometricPrecision;-webkit-text-stroke:0.3px;transform:scaleX(0.9000);transform-origin:0 0;">NEE</div><svg style="position:absolute;left:237px;top:456px;" width="5" height="3" viewBox="0 0 5 3"><rect x="0" y="1" width="5" height="1" fill="#0b3a52"/><rect x="2" y="0" width="1" height="3" fill="#0b3a52"/><rect x="1" y="0.5" width="3" height="2" fill="#0b3a52" opacity="0.35"/></svg><div style="position:absolute;left:285.00px;top:453px;color:#161616;font-size:10px;line-height:10px;font-weight:normal;letter-spacing:0.622px;white-space:nowrap;text-rendering:geometricPrecision;-webkit-text-stroke:0.45px;transform:scaleX(0.9000);transform-origin:0 0;">ED</div><svg style="position:absolute;left:302px;top:456px" width="5" height="3" viewBox="0 0 5 3"><rect x="0" y="1" width="5" height="1" fill="#0b3a52"/><rect x="2" y="0" width="1" height="3" fill="#0b3a52"/><rect x="1" y="0.5" width="3" height="2" fill="#0b3a52" opacity="0.35"/></svg><div style="position:absolute;left:396.00px;top:453px;color:#161616;font-size:10px;line-height:10px;font-weight:normal;letter-spacing:0.357px;white-space:nowrap;text-rendering:geometricPrecision;-webkit-text-stroke:0.45px;transform:scaleX(0.9000);transform-origin:0 0;">CONFIRMED Next Earnings Date for Q2 2023 <span style="color:#0b3a52">more...</span></div><div style="position:absolute;left:0px;top:469px;width:760px;height:1px;background:#cccccc;"></div><div style="position:absolute;left:0px;top:470px;width:760px;height:24px;background:#ffffff;"></div><div style="position:absolute;left:0px;top:470px;width:68px;height:24px;background:#bdd19c;"></div><div style="position:absolute;left:67px;top:470px;width:1px;height:24px;background:#b8cf98;"></div><div style="position:absolute;left:13.25px;top:478px;color:#161616;font-size:10px;line-height:10px;font-weight:normal;letter-spacing:0.056px;white-space:nowrap;text-rendering:geometricPrecision;-webkit-text-stroke:0.45px;transform:scaleX(0.9000);transform-origin:0 0;">7/25/2023</div><div style="position:absolute;left:152.15px;top:478px;color:#161616;font-size:10px;line-height:10px;font-weight:normal;letter-spacing:0.278px;white-space:nowrap;text-rendering:geometricPrecision;-webkit-text-stroke:0.45px;transform:scaleX(0.9000);transform-origin:0 0;">Tue</div><div style="position:absolute;left:215.30px;top:478px;color:#0b3a52;font-size:9.8px;line-height:9.8px;font-weight:bold;letter-spacing:0.389px;white-space:nowrap;text-rendering:geometricPrecision;-webkit-text-stroke:0.3px;transform:scaleX(0.9000);transform-origin:0 0;">NEE</div><svg style="position:absolute;left:237px;top:481px;" width="5" height="3" viewBox="0 0 5 3"><rect x="0" y="1" width="5" height="1" fill="#0b3a52"/><rect x="2" y="0" width="1" height="3" fill="#0b3a52"/><rect x="1" y="0.5" width="3" height="2" fill="#0b3a52" opacity="0.35"/></svg><div style="position:absolute;left:285.00px;top:478px;color:#161616;font-size:10px;line-height:10px;font-weight:normal;letter-spacing:0.333px;white-space:nowrap;text-rendering:geometricPrecision;-webkit-text-stroke:0.45px;transform:scaleX(0.9000);transform-origin:0 0;">ERN-RPT</div><svg style="position:absolute;left:330px;top:481px" width="5" height="3" viewBox="0 0 5 3"><rect x="0" y="1" width="5" height="1" fill="#0b3a52"/><rect x="2" y="0" width="1" height="3" fill="#0b3a52"/><rect x="1" y="0.5" width="3" height="2" fill="#0b3a52" opacity="0.35"/></svg><div style="position:absolute;left:396.00px;top:478px;color:#161616;font-size:10px;line-height:10px;font-weight:normal;letter-spacing:0.384px;white-space:nowrap;text-rendering:geometricPrecision;-webkit-text-stroke:0.45px;transform:scaleX(0.9000);transform-origin:0 0;">Earnings Report for Q2/2023: $ <span style="color:#2a7a1a">0.88</span> <span style="color:#0b3a52">more...</span></div><div style="position:absolute;left:0px;top:494px;width:760px;height:1px;background:#cccccc;"></div><div style="position:absolute;left:0px;top:495px;width:760px;height:37px;background:#e8eff1;"></div><div style="position:absolute;left:0px;top:495px;width:68px;height:37px;background:#b2ca96;"></div><div style="position:absolute;left:68px;top:495px;width:1px;height:37px;background:#eef2f8;"></div><div style="position:absolute;left:67px;top:495px;width:1px;height:37px;background:#adc791;"></div><div style="position:absolute;left:13.25px;top:502px;color:#161616;font-size:10px;line-height:10px;font-weight:normal;letter-spacing:0.181px;white-space:nowrap;text-rendering:geometricPrecision;-webkit-text-stroke:0.45px;transform:scaleX(0.9000);transform-origin:0 0;">7/11/2023</div><div style="position:absolute;left:87.85px;top:502px;color:#161616;font-size:10px;line-height:10px;font-weight:normal;letter-spacing:0.463px;white-space:nowrap;text-rendering:geometricPrecision;-webkit-text-stroke:0.45px;transform:scaleX(0.9000);transform-origin:0 0;">6:37 AM</div><div style="position:absolute;left:152.15px;top:502px;color:#161616;font-size:10px;line-height:10px;font-weight:normal;letter-spacing:0.278px;white-space:nowrap;text-rendering:geometricPrecision;-webkit-text-stroke:0.45px;transform:scaleX(0.9000);transform-origin:0 0;">Tue</div><div style="position:absolute;left:215.30px;top:502px;color:#0b3a52;font-size:9.8px;line-height:9.8px;font-weight:bold;letter-spacing:0.389px;white-space:nowrap;text-rendering:geometricPrecision;-webkit-text-stroke:0.3px;transform:scaleX(0.9000);transform-origin:0 0;">NEE</div><svg style="position:absolute;left:237px;top:505px;" width="5" height="3" viewBox="0 0 5 3"><rect x="0" y="1" width="5" height="1" fill="#0b3a52"/><rect x="2" y="0" width="1" height="3" fill="#0b3a52"/><rect x="1" y="0.5" width="3" height="2" fill="#0b3a52" opacity="0.35"/></svg><div style="position:absolute;left:285.00px;top:502px;color:#161616;font-size:10px;line-height:10px;font-weight:normal;letter-spacing:0.444px;white-space:nowrap;text-rendering:geometricPrecision;-webkit-text-stroke:0.45px;transform:scaleX(0.9000);transform-origin:0 0;">DTV</div><svg style="position:absolute;left:307px;top:505px" width="5" height="3" viewBox="0 0 5 3"><rect x="0" y="1" width="5" height="1" fill="#0b3a52"/><rect x="2" y="0" width="1" height="3" fill="#0b3a52"/><rect x="1" y="0.5" width="3" height="2" fill="#0b3a52" opacity="0.35"/></svg><div style="position:absolute;left:396.00px;top:502px;color:#161616;font-size:10px;line-height:10px;font-weight:normal;letter-spacing:0.376px;white-space:nowrap;text-rendering:geometricPrecision;-webkit-text-stroke:0.45px;transform:scaleX(0.9000);transform-origin:0 0;">Datebreaks Change for Q2 2023 from 7/20/2023 (Unconfirmed) to 7/25/2023</div><div style="position:absolute;left:396.00px;top:516px;color:#161616;font-size:10px;line-height:10px;font-weight:normal;letter-spacing:0.533px;white-space:nowrap;text-rendering:geometricPrecision;-webkit-text-stroke:0.45px;transform:scaleX(0.9000);transform-origin:0 0;">(Confirmed)</div><div style="position:absolute;left:0px;top:532px;width:760px;height:1px;background:#cccccc;"></div><div style="position:absolute;left:0px;top:533px;width:760px;height:24px;background:#ffffff;"></div><div style="position:absolute;left:0px;top:533px;width:68px;height:24px;background:#bdd19c;"></div><div style="position:absolute;left:67px;top:533px;width:1px;height:24px;background:#b8cf98;"></div><div style="position:absolute;left:13.25px;top:541px;color:#161616;font-size:10px;line-height:10px;font-weight:normal;letter-spacing:0.056px;white-space:nowrap;text-rendering:geometricPrecision;-webkit-text-stroke:0.45px;transform:scaleX(0.9000);transform-origin:0 0;">6/15/2023</div><div style="position:absolute;left:151.70px;top:541px;color:#161616;font-size:10px;line-height:10px;font-weight:normal;letter-spacing:0.278px;white-space:nowrap;text-rendering:geometricPrecision;-webkit-text-stroke:0.45px;transform:scaleX(0.9000);transform-origin:0 0;">Thu</div><div style="position:absolute;left:215.30px;top:541px;color:#0b3a52;font-size:9.8px;line-height:9.8px;font-weight:bold;letter-spacing:0.389px;white-space:nowrap;text-rendering:geometricPrecision;-webkit-text-stroke:0.3px;transform:scaleX(0.9000);transform-origin:0 0;">NEE</div><svg style="position:absolute;left:237px;top:544px;" width="5" height="3" viewBox="0 0 5 3"><rect x="0" y="1" width="5" height="1" fill="#0b3a52"/><rect x="2" y="0" width="1" height="3" fill="#0b3a52"/><rect x="1" y="0.5" width="3" height="2" fill="#0b3a52" opacity="0.35"/></svg><div style="position:absolute;left:285.00px;top:541px;color:#161616;font-size:10px;line-height:10px;font-weight:normal;letter-spacing:0.281px;white-space:nowrap;text-rendering:geometricPrecision;-webkit-text-stroke:0.45px;transform:scaleX(0.9000);transform-origin:0 0;">DIV-PAY</div><svg style="position:absolute;left:324px;top:544px" width="5" height="3" viewBox="0 0 5 3"><rect x="0" y="1" width="5" height="1" fill="#0b3a52"/><rect x="2" y="0" width="1" height="3" fill="#0b3a52"/><rect x="1" y="0.5" width="3" height="2" fill="#0b3a52" opacity="0.35"/></svg><div style="position:absolute;left:396.00px;top:541px;color:#161616;font-size:10px;line-height:10px;font-weight:normal;letter-spacing:0.435px;white-space:nowrap;text-rendering:geometricPrecision;-webkit-text-stroke:0.45px;transform:scaleX(0.9000);transform-origin:0 0;">Pay date for Quarterly dividend of $0.468 <span style="color:#0b3a52">more...</span></div><div style="position:absolute;left:0px;top:557px;width:760px;height:1px;background:#cccccc;"></div><div style="position:absolute;left:0px;top:558px;width:760px;height:24px;background:#e8eff1;"></div><div style="position:absolute;left:0px;top:558px;width:68px;height:24px;background:#b2ca96;"></div><div style="position:absolute;left:68px;top:558px;width:1px;height:24px;background:#eef2f8;"></div><div style="position:absolute;left:67px;top:558px;width:1px;height:24px;background:#adc791;"></div><div style="position:absolute;left:13.25px;top:566px;color:#161616;font-size:10px;line-height:10px;font-weight:normal;letter-spacing:0.056px;white-space:nowrap;text-rendering:geometricPrecision;-webkit-text-stroke:0.45px;transform:scaleX(0.9000);transform-origin:0 0;">5/30/2023</div><div style="position:absolute;left:152.15px;top:566px;color:#161616;font-size:10px;line-height:10px;font-weight:normal;letter-spacing:0.278px;white-space:nowrap;text-rendering:geometricPrecision;-webkit-text-stroke:0.45px;transform:scaleX(0.9000);transform-origin:0 0;">Tue</div><div style="position:absolute;left:215.30px;top:566px;color:#0b3a52;font-size:9.8px;line-height:9.8px;font-weight:bold;letter-spacing:0.389px;white-space:nowrap;text-rendering:geometricPrecision;-webkit-text-stroke:0.3px;transform:scaleX(0.9000);transform-origin:0 0;">NEE</div><svg style="position:absolute;left:237px;top:569px;" width="5" height="3" viewBox="0 0 5 3"><rect x="0" y="1" width="5" height="1" fill="#0b3a52"/><rect x="2" y="0" width="1" height="3" fill="#0b3a52"/><rect x="1" y="0.5" width="3" height="2" fill="#0b3a52" opacity="0.35"/></svg><div style="position:absolute;left:285.00px;top:566px;color:#161616;font-size:10px;line-height:10px;font-weight:normal;letter-spacing:0.304px;white-space:nowrap;text-rendering:geometricPrecision;-webkit-text-stroke:0.45px;transform:scaleX(0.9000);transform-origin:0 0;">DIV-REC</div><svg style="position:absolute;left:327px;top:569px" width="5" height="3" viewBox="0 0 5 3"><rect x="0" y="1" width="5" height="1" fill="#0b3a52"/><rect x="2" y="0" width="1" height="3" fill="#0b3a52"/><rect x="1" y="0.5" width="3" height="2" fill="#0b3a52" opacity="0.35"/></svg><div style="position:absolute;left:396.00px;top:566px;color:#161616;font-size:10px;line-height:10px;font-weight:normal;letter-spacing:0.460px;white-space:nowrap;text-rendering:geometricPrecision;-webkit-text-stroke:0.45px;transform:scaleX(0.9000);transform-origin:0 0;">Record date for Quarterly dividend of $0.468 <span style="color:#0b3a52">more...</span></div><div style="position:absolute;left:0px;top:582px;width:760px;height:1px;background:#cccccc;"></div><div style="position:absolute;left:0px;top:583px;width:760px;height:24px;background:#ffffff;"></div><div style="position:absolute;left:0px;top:583px;width:68px;height:24px;background:#bdd19c;"></div><div style="position:absolute;left:67px;top:583px;width:1px;height:24px;background:#b8cf98;"></div><div style="position:absolute;left:13.25px;top:591px;color:#161616;font-size:10px;line-height:10px;font-weight:normal;letter-spacing:0.056px;white-space:nowrap;text-rendering:geometricPrecision;-webkit-text-stroke:0.45px;transform:scaleX(0.9000);transform-origin:0 0;">5/26/2023</div><div style="position:absolute;left:153.95px;top:591px;color:#161616;font-size:10px;line-height:10px;font-weight:normal;letter-spacing:0.389px;white-space:nowrap;text-rendering:geometricPrecision;-webkit-text-stroke:0.45px;transform:scaleX(0.9000);transform-origin:0 0;">Fri</div><div style="position:absolute;left:215.30px;top:591px;color:#0b3a52;font-size:9.8px;line-height:9.8px;font-weight:bold;letter-spacing:0.389px;white-space:nowrap;text-rendering:geometricPrecision;-webkit-text-stroke:0.3px;transform:scaleX(0.9000);transform-origin:0 0;">NEE</div><svg style="position:absolute;left:237px;top:594px;" width="5" height="3" viewBox="0 0 5 3"><rect x="0" y="1" width="5" height="1" fill="#0b3a52"/><rect x="2" y="0" width="1" height="3" fill="#0b3a52"/><rect x="1" y="0.5" width="3" height="2" fill="#0b3a52" opacity="0.35"/></svg><div style="position:absolute;left:285.00px;top:591px;color:#161616;font-size:10px;line-height:10px;font-weight:normal;letter-spacing:0.293px;white-space:nowrap;text-rendering:geometricPrecision;-webkit-text-stroke:0.45px;transform:scaleX(0.9000);transform-origin:0 0;">DIV-EX</div><svg style="position:absolute;left:319px;top:594px" width="5" height="3" viewBox="0 0 5 3"><rect x="0" y="1" width="5" height="1" fill="#0b3a52"/><rect x="2" y="0" width="1" height="3" fill="#0b3a52"/><rect x="1" y="0.5" width="3" height="2" fill="#0b3a52" opacity="0.35"/></svg><div style="position:absolute;left:396.00px;top:591px;color:#161616;font-size:10px;line-height:10px;font-weight:normal;letter-spacing:0.437px;white-space:nowrap;text-rendering:geometricPrecision;-webkit-text-stroke:0.45px;transform:scaleX(0.9000);transform-origin:0 0;">Ex Date for Quarterly dividend of $0.468 <span style="color:#0b3a52">more...</span></div><div style="position:absolute;left:0px;top:607px;width:760px;height:1px;background:#cccccc;"></div><div style="position:absolute;left:0px;top:608px;width:760px;height:24px;background:#e8eff1;"></div><div style="position:absolute;left:0px;top:608px;width:68px;height:24px;background:#b2ca96;"></div><div style="position:absolute;left:68px;top:608px;width:1px;height:24px;background:#eef2f8;"></div><div style="position:absolute;left:67px;top:608px;width:1px;height:24px;background:#adc791;"></div><div style="position:absolute;left:13.25px;top:616px;color:#161616;font-size:10px;line-height:10px;font-weight:normal;letter-spacing:0.056px;white-space:nowrap;text-rendering:geometricPrecision;-webkit-text-stroke:0.45px;transform:scaleX(0.9000);transform-origin:0 0;">5/18/2023</div><div style="position:absolute;left:87.85px;top:616px;color:#161616;font-size:10px;line-height:10px;font-weight:normal;letter-spacing:0.296px;white-space:nowrap;text-rendering:geometricPrecision;-webkit-text-stroke:0.45px;transform:scaleX(0.9000);transform-origin:0 0;">6:38 PM</div><div style="position:absolute;left:151.70px;top:616px;color:#161616;font-size:10px;line-height:10px;font-weight:normal;letter-spacing:0.278px;white-space:nowrap;text-rendering:geometricPrecision;-webkit-text-stroke:0.45px;transform:scaleX(0.9000);transform-origin:0 0;">Thu</div><div style="position:absolute;left:215.30px;top:616px;color:#0b3a52;font-size:9.8px;line-height:9.8px;font-weight:bold;letter-spacing:0.389px;white-space:nowrap;text-rendering:geometricPrecision;-webkit-text-stroke:0.3px;transform:scaleX(0.9000);transform-origin:0 0;">NEE</div><svg style="position:absolute;left:237px;top:619px;" width="5" height="3" viewBox="0 0 5 3"><rect x="0" y="1" width="5" height="1" fill="#0b3a52"/><rect x="2" y="0" width="1" height="3" fill="#0b3a52"/><rect x="1" y="0.5" width="3" height="2" fill="#0b3a52" opacity="0.35"/></svg><div style="position:absolute;left:285.00px;top:616px;color:#161616;font-size:10px;line-height:10px;font-weight:normal;letter-spacing:0.304px;white-space:nowrap;text-rendering:geometricPrecision;-webkit-text-stroke:0.45px;transform:scaleX(0.9000);transform-origin:0 0;">DIV-ANC</div><svg style="position:absolute;left:327px;top:619px" width="5" height="3" viewBox="0 0 5 3"><rect x="0" y="1" width="5" height="1" fill="#0b3a52"/><rect x="2" y="0" width="1" height="3" fill="#0b3a52"/><rect x="1" y="0.5" width="3" height="2" fill="#0b3a52" opacity="0.35"/></svg><div style="position:absolute;left:396.00px;top:616px;color:#161616;font-size:10px;line-height:10px;font-weight:normal;letter-spacing:0.491px;white-space:nowrap;text-rendering:geometricPrecision;-webkit-text-stroke:0.45px;transform:scaleX(0.9000);transform-origin:0 0;">Announcement date for Quarterly dividend of $0.468 <span style="color:#0b3a52">more...</span></div><div style="position:absolute;left:0px;top:632px;width:760px;height:1px;background:#cccccc;"></div><div style="position:absolute;left:0px;top:633px;width:760px;height:24px;background:#ffffff;"></div><div style="position:absolute;left:0px;top:633px;width:68px;height:24px;background:#bdd19c;"></div><div style="position:absolute;left:67px;top:633px;width:1px;height:24px;background:#b8cf98;"></div><div style="position:absolute;left:13.25px;top:641px;color:#161616;font-size:10px;line-height:10px;font-weight:normal;letter-spacing:0.056px;white-space:nowrap;text-rendering:geometricPrecision;-webkit-text-stroke:0.45px;transform:scaleX(0.9000);transform-origin:0 0;">5/18/2023</div><div style="position:absolute;left:85.15px;top:641px;color:#161616;font-size:10px;line-height:10px;font-weight:normal;letter-spacing:0.492px;white-space:nowrap;text-rendering:geometricPrecision;-webkit-text-stroke:0.45px;transform:scaleX(0.9000);transform-origin:0 0;">11:00 AM</div><div style="position:absolute;left:151.70px;top:641px;color:#161616;font-size:10px;line-height:10px;font-weight:normal;letter-spacing:0.278px;white-space:nowrap;text-rendering:geometricPrecision;-webkit-text-stroke:0.45px;transform:scaleX(0.9000);transform-origin:0 0;">Thu</div><div style="position:absolute;left:215.30px;top:641px;color:#0b3a52;font-size:9.8px;line-height:9.8px;font-weight:bold;letter-spacing:0.389px;white-space:nowrap;text-rendering:geometricPrecision;-webkit-text-stroke:0.3px;transform:scaleX(0.9000);transform-origin:0 0;">NEE</div><svg style="position:absolute;left:237px;top:644px;" width="5" height="3" viewBox="0 0 5 3"><rect x="0" y="1" width="5" height="1" fill="#0b3a52"/><rect x="2" y="0" width="1" height="3" fill="#0b3a52"/><rect x="1" y="0.5" width="3" height="2" fill="#0b3a52" opacity="0.35"/></svg><div style="position:absolute;left:285.00px;top:641px;color:#161616;font-size:10px;line-height:10px;font-weight:normal;letter-spacing:0.389px;white-space:nowrap;text-rendering:geometricPrecision;-webkit-text-stroke:0.45px;transform:scaleX(0.9000);transform-origin:0 0;">SHARE</div><svg style="position:absolute;left:321px;top:644px" width="5" height="3" viewBox="0 0 5 3"><rect x="0" y="1" width="5" height="1" fill="#0b3a52"/><rect x="2" y="0" width="1" height="3" fill="#0b3a52"/><rect x="1" y="0.5" width="3" height="2" fill="#0b3a52" opacity="0.35"/></svg><div style="position:absolute;left:396.00px;top:641px;color:#161616;font-size:10px;line-height:10px;font-weight:normal;letter-spacing:0.457px;white-space:nowrap;text-rendering:geometricPrecision;-webkit-text-stroke:0.45px;transform:scaleX(0.9000);transform-origin:0 0;">Shareholder Meeting <span style="color:#0b3a52">more...</span></div><div style="position:absolute;left:0px;top:657px;width:760px;height:1px;background:#cccccc;"></div><div style="position:absolute;left:0px;top:658px;width:760px;height:5px;background:#e8eff1;"></div><div style="position:absolute;left:0px;top:658px;width:68px;height:5px;background:#b2ca96;"></div><div style="position:absolute;left:0px;top:643px;width:761px;height:20px;background:rgba(154,154,154,0.82);"></div><div style="position:absolute;left:0.30px;top:648px;color:#141414;font-size:10px;line-height:10px;font-weight:normal;letter-spacing:0.162px;white-space:nowrap;text-rendering:geometricPrecision;-webkit-text-stroke:0.45px;transform:scaleX(0.9000);transform-origin:0 0;">© 2023 Wall Street Horizon, Inc. | Terms of Use | Privacy Statement</div>
</body></html>
